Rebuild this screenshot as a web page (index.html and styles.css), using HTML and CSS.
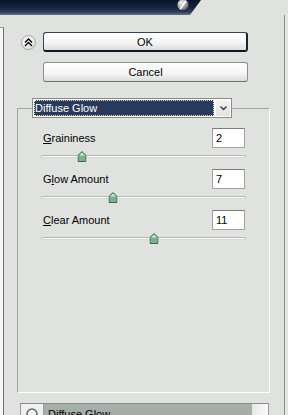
FILE: index.html
```html
<!DOCTYPE html>
<html lang="en">
<head>
    <meta charset="UTF-8">
    <meta name="viewport" content="width=device-width, initial-scale=1.0">
    <title>Diffuse Glow</title>
    <link rel="stylesheet" href="styles.css">
</head>
<body>
    <div class="titlebar">
        <div class="titlebar-fill"></div>
        <svg class="titlebar-knob" width="14" height="14" viewBox="0 0 14 14">
            <defs>
                <radialGradient id="knobFill" cx="35%" cy="30%" r="75%">
                    <stop offset="0" stop-color="#f2f2f2"/>
                    <stop offset="0.6" stop-color="#9a9ea6"/>
                    <stop offset="1" stop-color="#3c4250"/>
                </radialGradient>
            </defs>
            <circle cx="7" cy="7" r="6" fill="url(#knobFill)" stroke="#1a2234" stroke-width="0.8"/>
            <path d="M9.5 3.5 L4.5 10.5" stroke="#ffffff" stroke-width="1.8" stroke-linecap="round"/>
        </svg>
    </div>

    <div class="window">
        <div class="preview-edge"></div>

        <div class="controls">
            <div class="actions">
                <button class="collapse" aria-label="Collapse">
                    <svg width="9" height="9" viewBox="0 0 9 9">
                        <path d="M1 4.5 L4.5 1 L8 4.5 M1 8 L4.5 4.5 L8 8" fill="none" stroke="#000" stroke-width="1.4"/>
                    </svg>
                </button>
                <div class="action-buttons">
                    <button class="btn btn-default">OK</button>
                    <button class="btn">Cancel</button>
                </div>
            </div>

            <fieldset class="group">
                <legend>
                    <div class="select">
                        <span class="select-value">Diffuse Glow</span>
                        <span class="select-arrow">
                            <svg width="7" height="5" viewBox="0 0 7 5">
                                <path d="M0.5 0.5 L3.5 3.5 L6.5 0.5" fill="none" stroke="#333" stroke-width="1.3"/>
                            </svg>
                        </span>
                    </div>
                </legend>

                <div class="slider-row">
                    <div class="slider-head">
                        <label><u>G</u>raininess</label>
                        <input class="value-box" type="text" value="2">
                    </div>
                    <div class="slider-track">
                        <div class="track-line"></div>
                        <svg class="thumb" style="left: 20%" width="9" height="11" viewBox="0 0 9 11">
                            <path d="M4.5 0.5 L8.5 4.5 L8.5 10.5 L0.5 10.5 L0.5 4.5 Z" fill="#7fae8e" stroke="#3f6b4f"/>
                            <path d="M4.5 1.8 L7.3 4.6 L1.7 4.6 Z" fill="#d2ead8"/>
                        </svg>
                    </div>
                </div>

                <div class="slider-row">
                    <div class="slider-head">
                        <label>G<u>l</u>ow Amount</label>
                        <input class="value-box" type="text" value="7">
                    </div>
                    <div class="slider-track">
                        <div class="track-line"></div>
                        <svg class="thumb" style="left: 35%" width="9" height="11" viewBox="0 0 9 11">
                            <path d="M4.5 0.5 L8.5 4.5 L8.5 10.5 L0.5 10.5 L0.5 4.5 Z" fill="#7fae8e" stroke="#3f6b4f"/>
                            <path d="M4.5 1.8 L7.3 4.6 L1.7 4.6 Z" fill="#d2ead8"/>
                        </svg>
                    </div>
                </div>

                <div class="slider-row">
                    <div class="slider-head">
                        <label><u>C</u>lear Amount</label>
                        <input class="value-box" type="text" value="11">
                    </div>
                    <div class="slider-track">
                        <div class="track-line"></div>
                        <svg class="thumb" style="left: 55%" width="9" height="11" viewBox="0 0 9 11">
                            <path d="M4.5 0.5 L8.5 4.5 L8.5 10.5 L0.5 10.5 L0.5 4.5 Z" fill="#7fae8e" stroke="#3f6b4f"/>
                            <path d="M4.5 1.8 L7.3 4.6 L1.7 4.6 Z" fill="#d2ead8"/>
                        </svg>
                    </div>
                </div>
            </fieldset>

            <div class="layers">
                <div class="layer">
                    <span class="layer-icon">
                        <svg width="14" height="14" viewBox="0 0 14 14">
                            <circle cx="7" cy="7" r="5" fill="none" stroke="#6a6c6a" stroke-width="1.6"/>
                        </svg>
                    </span>
                    <span class="layer-name">Diffuse Glow</span>
                    <span class="layer-scroll"></span>
                </div>
            </div>
        </div>

        <div class="rail"></div>
    </div>
</body>
</html>
```

FILE: styles.css
```css
/* Base */
body {
    margin: 0;
    width: 288px;
    height: 415px;
    overflow: hidden;
    background: #e0e2e0;
    font-family: 'Liberation Sans', Arial, sans-serif;
    font-size: 11px;
    color: #000;
}

/* Title bar */
.titlebar {
    position: relative;
    height: 15px;
}

.titlebar-fill {
    width: 201px;
    height: 15px;
    background: linear-gradient(#0b1526, #16243c 50%, #2e3e5e 80%, #66748e);
    clip-path: polygon(0 0, 100% 0, calc(100% - 11px) 100%, 0 100%);
}

.titlebar-knob {
    position: absolute;
    left: 176px;
    top: -2px;
}

/* Window body */
.window {
    display: flex;
    height: 400px;
}

.preview-edge {
    width: 3px;
    margin-top: 12px;
    background: #f6f6f6;
    border-top: 1px solid #9a9c9a;
    border-right: 1px solid #6e706e;
}

.controls {
    flex: 1;
    display: flex;
    flex-direction: column;
    overflow: hidden;
}

.controls > * {
    flex-shrink: 0;
}

.rail {
    width: 3px;
    border-left: 1px solid #8c8e8c;
    background: #e4e6e4;
}

/* OK / Cancel */
.actions {
    display: flex;
    align-items: flex-start;
    padding: 17px 0 0 17px;
}

.collapse {
    width: 15px;
    height: 15px;
    margin: 3px 7px 0 0;
    padding: 0;
    border: 1px solid #a4a6a4;
    border-radius: 50%;
    background: radial-gradient(circle at 40% 35%, #ffffff, #e4e4e4 70%, #c8c8c8);
    display: flex;
    align-items: center;
    justify-content: center;
}

.action-buttons {
    display: flex;
    flex-direction: column;
    gap: 10px;
    width: 205px;
}

.btn {
    height: 20px;
    padding: 0;
    border: 1px solid #8e908e;
    border-bottom-color: #6e706e;
    border-radius: 3px;
    background: linear-gradient(#ffffff, #f6f6f6 55%, #dcdcdc);
    font-family: 'Liberation Sans', Arial, sans-serif;
    font-size: 11px;
    color: #000;
}

.btn-default {
    border: 1px solid #3a4256;
    border-right-width: 2px;
    border-bottom-width: 2px;
    border-bottom-color: #14161e;
    border-right-color: #1e2230;
}

/* Filter group */
.group {
    box-sizing: border-box;
    width: 253px;
    height: 295px;
    margin: 16px 0 0 13px;
    padding: 0 23px 0 14px;
    border: 1px solid;
    border-color: #a2a4a2 #ffffff #ffffff #a2a4a2;
    min-inline-size: 0;
}

.group legend {
    padding: 0;
    margin: 0;
}

.select {
    box-sizing: border-box;
    display: flex;
    width: 200px;
    height: 20px;
    padding: 1px;
    border: 1px solid #8a8c8a;
    background: #fff;
}

.select-value {
    flex: 1;
    padding-left: 1px;
    line-height: 16px;
    background: #2a3a5c;
    color: #fff;
    outline: 1px dotted #e8e8c0;
    outline-offset: -1px;
}

.select-arrow {
    width: 14px;
    margin-left: 2px;
    background: linear-gradient(#f4f4f4, #e2e2e2);
    display: flex;
    align-items: center;
    justify-content: center;
}

/* Sliders */
.slider-row {
    margin: 7px 0 0 9px;
}

.slider-row:first-of-type {
    margin-top: 10px;
}

.slider-head {
    display: flex;
    justify-content: space-between;
    align-items: center;
    height: 20px;
}

.slider-head label {
    padding-left: 2px;
}

.value-box {
    box-sizing: border-box;
    width: 33px;
    height: 20px;
    margin: 0 1px 0 0;
    padding: 0 0 0 3px;
    border: 1px solid #a0a2a0;
    border-top-color: #7c7e7c;
    background: #fff;
    font-family: 'Liberation Sans', Arial, sans-serif;
    font-size: 11px;
    color: #000;
    outline: none;
}

.slider-track {
    position: relative;
    box-sizing: border-box;
    height: 14px;
    padding-top: 7px;
}

.track-line {
    box-sizing: border-box;
    height: 3px;
    border: 1px solid #b6b8b6;
    border-bottom-color: #d6d8d6;
    border-radius: 2px;
    background: #fafafa;
}

.thumb {
    position: absolute;
    top: 3px;
    transform: translateX(-50%);
}

/* Layer list */
.layers {
    margin: 10px 0 0 16px;
    width: 247px;
    height: 20px;
    border-top: 1px solid #8a8c8a;
    border-left: 1px solid #9a9c9a;
    border-right: 1px solid #9a9c9a;
}

.layer {
    display: flex;
    height: 100%;
}

.layer-icon {
    width: 22px;
    border-right: 1px solid #9a9c9a;
    background: #f0f0f0;
    display: flex;
    justify-content: center;
    padding-top: 3px;
}

.layer-name {
    flex: 1;
    padding: 4px 0 0 4px;
    background: #a6aeaa;
}

.layer-scroll {
    width: 16px;
    background: linear-gradient(90deg, #e6e8e6, #fafafa);
}
```
